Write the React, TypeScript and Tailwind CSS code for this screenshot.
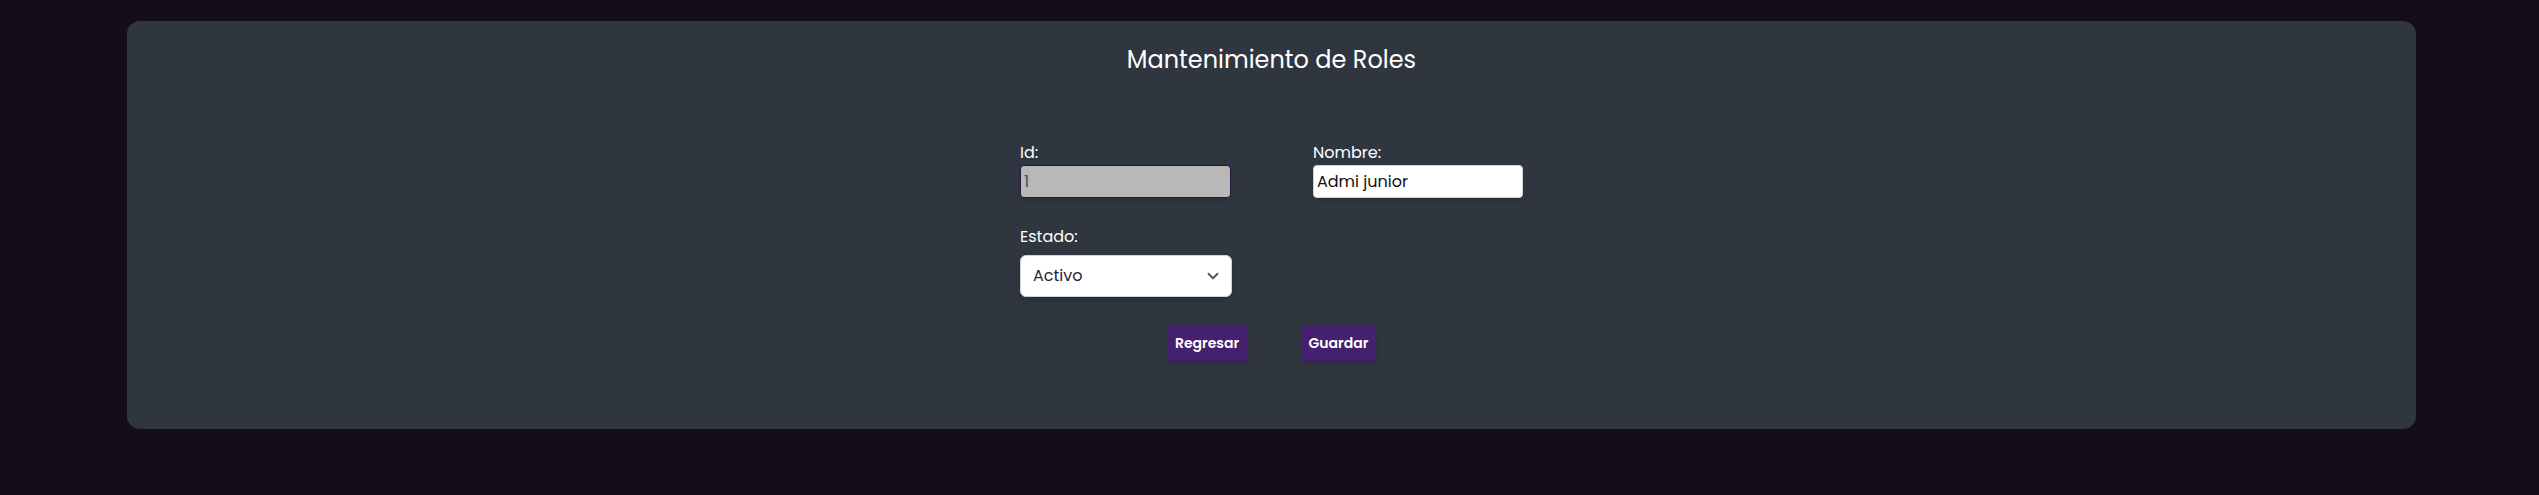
import { ChevronDown } from 'lucide-react'

export default function App() {
  return (
    <div className="min-h-[495px] bg-[#130e1a] pt-[21px] font-['Poppins','Inter','Noto_Sans',sans-serif]">
      <div className="ml-[127px] w-[2289px] h-[408px] rounded-[13px] bg-[#30363f] pt-[23px]">
        <h1 className="text-center text-[24px] leading-[32px] font-normal text-white">Mantenimiento de Roles</h1>

        <div className="mx-auto mt-[67px] w-[503px]">
          <div className="grid grid-cols-[211px_210px] gap-x-[82px]">
            <label className="flex flex-col">
              <span className="text-[16px] leading-[20px] text-white mb-[2px]">Id:</span>
              <input
                disabled
                value="1"
                readOnly
                className="h-[33px] w-[211px] rounded-[4px] border border-[#2a1345] bg-[#b8b8b8] px-[3px] text-[16px] text-[#4b4b4b] shadow-md"
              />
            </label>
            <label className="flex flex-col">
              <span className="text-[16px] leading-[20px] text-white mb-[2px]">Nombre:</span>
              <input
                value="Admi junior"
                readOnly
                className="h-[33px] w-[210px] rounded-[4px] border border-[#d1d5db] bg-white px-[3px] text-[16px] text-[#111] shadow-md"
              />
            </label>
          </div>

          <label className="mt-[29px] flex flex-col w-[212px]">
            <span className="text-[16px] leading-[20px] text-white mb-[8px]">Estado:</span>
            <div className="relative">
              <select className="h-[42px] w-[212px] appearance-none rounded-[6px] border border-[#d1d5db] bg-white pl-[12px] text-[16px] text-[#1f2937] shadow-md">
                <option>Activo</option>
                <option>Inactivo</option>
              </select>
              <ChevronDown size={18} strokeWidth={2.5} className="pointer-events-none absolute right-[10px] top-[12px] text-[#4b5563]" />
            </div>
          </label>

          <div className="mt-[28px] flex justify-center gap-[54px]">
            <button className="h-[36px] w-[80px] rounded-[2px] bg-[#45206e] text-[14px] font-semibold text-white shadow-md">Regresar</button>
            <button className="h-[36px] w-[75px] rounded-[2px] bg-[#45206e] text-[14px] font-semibold text-white shadow-md">Guardar</button>
          </div>
        </div>
      </div>
    </div>
  )
}
